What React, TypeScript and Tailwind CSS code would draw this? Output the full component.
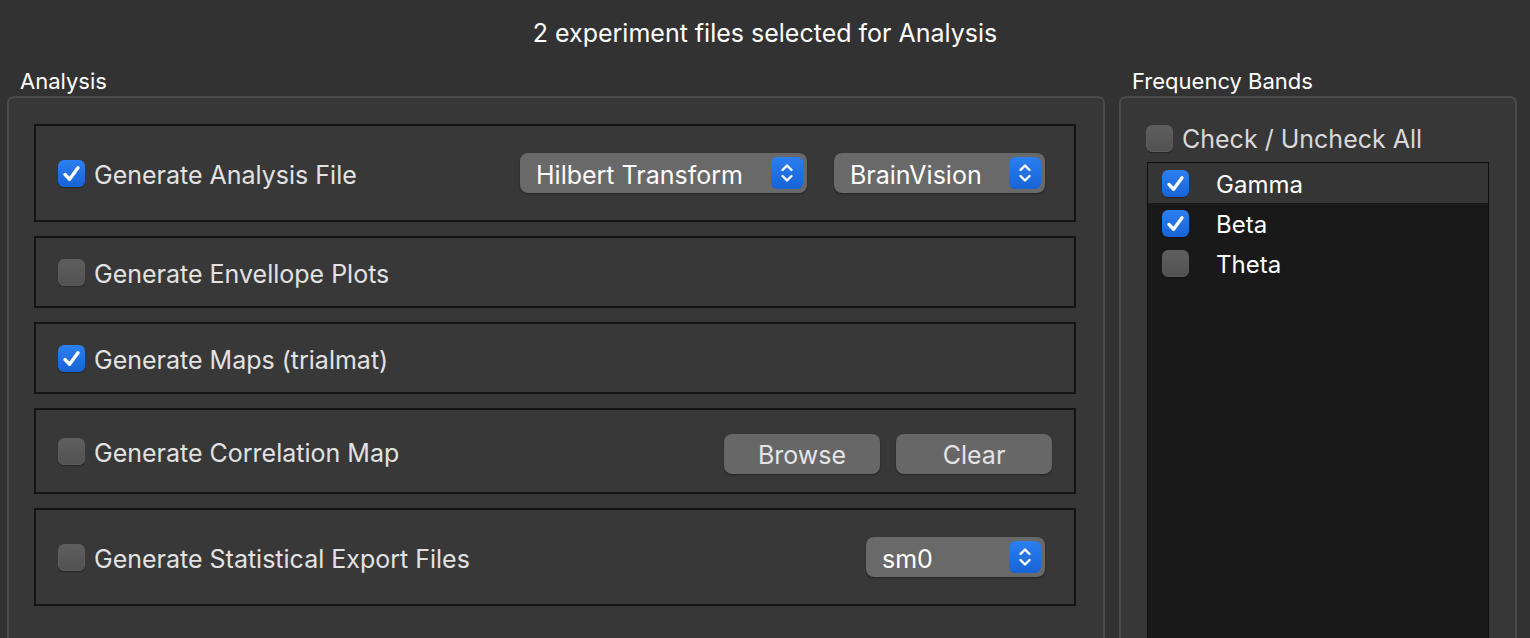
import type { ReactNode } from 'react'

function CheckBox({ checked }: { checked: boolean }) {
  if (!checked) {
    return (
      <span className="block size-[27px] shrink-0 rounded-[6px] border border-[#5c5c5c] bg-gradient-to-b from-[#5e5e5e] to-[#525252] shadow-[0_1px_1px_rgba(0,0,0,0.35)]" />
    )
  }
  return (
    <span className="flex size-[27px] shrink-0 items-center justify-center rounded-[6px] bg-gradient-to-b from-[#2c80f2] to-[#1763d6] shadow-[0_1px_1px_rgba(0,0,0,0.35)]">
      <svg viewBox="0 0 27 27" className="size-[27px]" fill="none">
        <path d="M7 14.5 L11.6 19.2 L20 7.8" stroke="#fff" strokeWidth="3.4" strokeLinecap="round" strokeLinejoin="round" />
      </svg>
    </span>
  )
}

function Stepper() {
  return (
    <span className="flex size-[32px] shrink-0 items-center justify-center rounded-[6px] bg-gradient-to-b from-[#2a7ef0] to-[#1764d6]">
      <svg viewBox="0 0 32 32" className="size-[32px]" fill="none">
        <path d="M11.5 13 L16 8.5 L20.5 13" stroke="#fff" strokeWidth="2.4" strokeLinecap="round" strokeLinejoin="round" />
        <path d="M11.5 19 L16 23.5 L20.5 19" stroke="#fff" strokeWidth="2.4" strokeLinecap="round" strokeLinejoin="round" />
      </svg>
    </span>
  )
}

function Select({ value, width }: { value: string; width: string }) {
  return (
    <div className={`flex h-[40px] items-center justify-between rounded-[8px] bg-[#696969] pl-[16px] pr-[4px] shadow-[0_1px_2px_rgba(0,0,0,0.4)] ${width}`}>
      <span className="pt-[4px] text-[25px] leading-none text-white">{value}</span>
      <Stepper />
    </div>
  )
}

function Button({ children }: { children: ReactNode }) {
  return (
    <button
      type="button"
      className="h-[40px] w-[156px] rounded-[8px] bg-[#676767] pt-[4px] text-[25px] leading-none text-[#e4e4e4] shadow-[0_1px_2px_rgba(0,0,0,0.4)]"
    >
      {children}
    </button>
  )
}

function Row({ height, checked, label, children }: { height: string; checked: boolean; label: string; children?: ReactNode }) {
  return (
    <div className={`flex items-center border-2 border-[#141414] bg-[#383838] pl-[22px] ${height}`}>
      <CheckBox checked={checked} />
      <span className="ml-[9px] pt-[4px] text-[25px] leading-none text-[#e2e2e2]">{label}</span>
      <div className="flex-1" />
      {children}
    </div>
  )
}

const bands = [
  { name: 'Gamma', checked: true },
  { name: 'Beta', checked: true },
  { name: 'Theta', checked: false },
]

export default function App() {
  return (
    <div className="h-[638px] w-[1530px] overflow-hidden bg-[#323232] font-['Inter','Liberation_Sans',sans-serif] text-white">
      <div className="flex h-[66px] items-center justify-center pt-[2px] text-[25px] text-white">
        2 experiment files selected for Analysis
      </div>

      <div className="flex gap-[14px] pl-[7px]">
        {/* Analysis group */}
        <div className="w-[1098px]">
          <div className="flex h-[30px] items-center pl-[13px] text-[22px] text-white">Analysis</div>
          <div className="h-[560px] rounded-[7px] border-2 border-[#4a4a4a] bg-[#373737] pl-[25px] pr-[27px] pt-[26px]">
            <div className="flex flex-col gap-[14px]">
              <Row height="h-[98px]" checked label="Generate Analysis File">
                <div className="flex gap-[27px] pr-[29px]">
                  <Select value="Hilbert Transform" width="w-[287px]" />
                  <Select value="BrainVision" width="w-[211px]" />
                </div>
              </Row>
              <Row height="h-[72px]" checked={false} label="Generate Envellope Plots" />
              <Row height="h-[72px]" checked label="Generate Maps (trialmat)" />
              <Row height="h-[86px]" checked={false} label="Generate Correlation Map">
                <div className="flex gap-[16px] pr-[22px] pt-[5px]">
                  <Button>Browse</Button>
                  <Button>Clear</Button>
                </div>
              </Row>
              <Row height="h-[98px]" checked={false} label="Generate Statistical Export Files">
                <div className="pr-[29px]">
                  <Select value="sm0" width="w-[179px]" />
                </div>
              </Row>
            </div>
          </div>
        </div>

        {/* Frequency bands group */}
        <div className="w-[398px]">
          <div className="flex h-[30px] items-center pl-[13px] text-[22px] text-white">Frequency Bands</div>
          <div className="h-[560px] rounded-[7px] border-2 border-[#4a4a4a] bg-[#373737] pl-[25px] pr-[26px] pt-[26px]">
            <div className="flex h-[28px] items-center">
              <CheckBox checked={false} />
              <span className="ml-[9px] pt-[3px] text-[25px] leading-none text-[#d9d9d9]">Check / Uncheck All</span>
            </div>
            <div className="ml-px mt-[10px] h-[500px] w-[342px] border border-[#0e0e0e] bg-[#191919]">
              {bands.map((b, i) => (
                <div
                  key={b.name}
                  className={`flex h-[40px] items-center pl-[14px] ${i === 0 ? 'bg-[#353535]' : ''}`}
                >
                  <CheckBox checked={b.checked} />
                  <span className="ml-[27px] pt-[4px] text-[24px] leading-none text-white">{b.name}</span>
                </div>
              ))}
            </div>
          </div>
        </div>
      </div>
    </div>
  )
}
